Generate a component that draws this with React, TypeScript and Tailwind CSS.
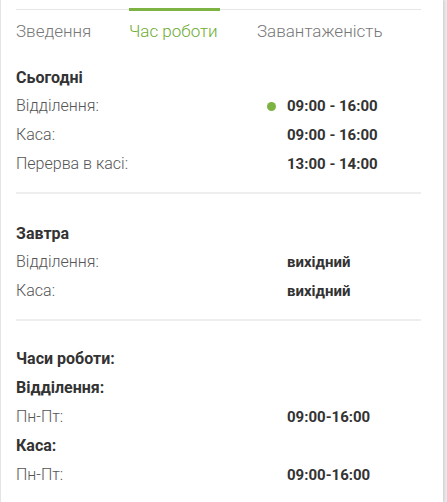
import React from 'react';

type Row = { label: string; value: string; dot?: boolean };

const font = { fontFamily: 'Roboto, "Liberation Sans", sans-serif' };

const InfoRow: React.FC<Row> = ({ label, value, dot }) => (
  <div className="flex items-center h-[29px]">
    <div className="w-[251px] text-[16px] font-light text-[#555]">{label}</div>
    <div className="w-[20px] flex items-center">
      {dot && <span className="w-[9px] h-[9px] rounded-full bg-[#7cb342]"></span>}
    </div>
    <div className="text-[15px] font-bold text-[#333]">{value}</div>
  </div>
);

const Heading: React.FC<{ children: React.ReactNode; className?: string }> = ({ children, className = '' }) => (
  <div className={`text-[16px] font-bold text-[#333] h-[22px] flex items-center ${className}`}>{children}</div>
);

const App: React.FC = () => {
  const tabs = ['Зведення', 'Час роботи', 'Завантаженість'];

  return (
    <div className="w-[447px] h-[502px] bg-[#e9ebec] flex" style={font}>
      <div className="w-[443px] h-full bg-white border-l border-[#e4e4e4] shadow-[1px_0_3px_rgba(0,0,0,0.15)] overflow-hidden">
        <div className="mx-[15px] w-[405px] border-t border-[#e6e6e6] mt-[9px] flex">
          {tabs.map((t, i) => (
            <div
              key={t}
              className={`relative pt-[9px] text-[17px] font-light ${i === 1 ? 'text-[#6fac31]' : 'text-[#777]'} ${i === 0 ? 'w-[113px]' : i === 1 ? 'w-[128px]' : ''}`}
            >
              {i === 1 && <span className="absolute left-0 -top-[2px] w-[91px] h-[3px] bg-[#7cb342]"></span>}
              {t}
            </div>
          ))}
        </div>

        <div className="px-[15px] pt-[22px]">
          <Heading>Сьогодні</Heading>
          <div className="mt-[3px]">
            <InfoRow label="Відділення:" value="09:00 - 16:00" dot />
            <InfoRow label="Каса:" value="09:00 - 16:00" />
            <InfoRow label="Перерва в касі:" value="13:00 - 14:00" />
          </div>
          <div className="w-[405px] border-t-2 border-[#eeeeee] mt-[13px]"></div>

          <Heading className="mt-[29px]">Завтра</Heading>
          <div className="mt-[3px]">
            <InfoRow label="Відділення:" value="вихідний" />
            <InfoRow label="Каса:" value="вихідний" />
          </div>
          <div className="w-[405px] border-t-2 border-[#eeeeee] mt-[13px]"></div>

          <Heading className="mt-[27px]">Часи роботи:</Heading>
          <div className="text-[16px] font-bold text-[#333] h-[29px] flex items-center mt-[4px]">Відділення:</div>
          <InfoRow label="Пн-Пт:" value="09:00-16:00" />
          <div className="text-[16px] font-bold text-[#333] h-[29px] flex items-center">Каса:</div>
          <InfoRow label="Пн-Пт:" value="09:00-16:00" />
        </div>
      </div>
    </div>
  );
};

export default App;
